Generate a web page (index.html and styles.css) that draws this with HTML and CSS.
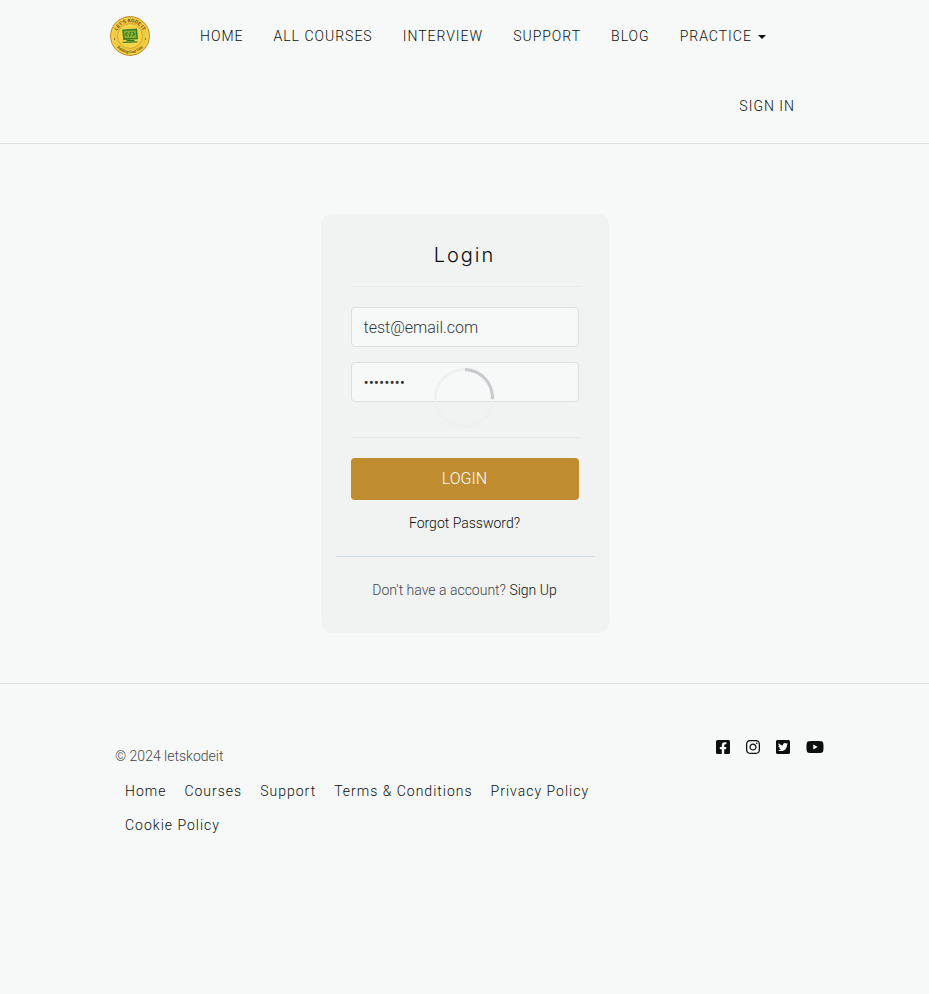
FILE: index.html
```html
<!DOCTYPE html>
<html lang="en">
<head>
<meta charset="utf-8">
<meta name="viewport" content="width=device-width, initial-scale=1">
<title>Login</title>
<link rel="stylesheet" href="styles.css">
</head>
<body>
<header class="site-header">
  <div class="container header-inner">
    <a class="brand" href="#" aria-label="Home page">
      <svg class="brand-logo" viewBox="0 0 40 40" aria-hidden="true">
        <defs>
          <path id="arc-top" d="M6.2 20a13.8 13.8 0 0 1 27.6 0"/>
          <path id="arc-bottom" d="M2.7 20a17.3 17.3 0 0 0 34.6 0"/>
        </defs>
        <circle cx="20" cy="20" r="19.4" fill="#efc93f" stroke="#b98a2a" stroke-width="1"/>
        <circle cx="20" cy="20" r="17.9" fill="none" stroke="#f8da55" stroke-width="1"/>
        <circle cx="20" cy="20" r="12.4" fill="#f6d649" stroke="#c99a2c" stroke-width=".8"/>
        <text class="seal-text top"><textPath href="#arc-top" startOffset="50%">LET'S KODE IT</textPath></text>
        <text class="seal-text"><textPath href="#arc-bottom" startOffset="50%">Adding Cod Tale</textPath></text>
        <circle cx="4.5" cy="23" r=".7" fill="#76551a"/>
        <circle cx="35.5" cy="23" r=".7" fill="#76551a"/>
        <path d="M13 14.200 26.400 13.400l.8 9.200-13.300.5z" fill="#8eae32" stroke="#397d24" stroke-width="1.500"/>
        <path d="m17.500 16.300-2 2 2 2m5-4.400 2 2-2 2m-2-4-1 4.600m-3 4.200h8M12.500 26.300l15-.5" fill="none" stroke="#397d24" stroke-width="1.300"/>
      </svg>
    </a>
    <nav class="main-nav" aria-label="Main">
      <a href="#">HOME</a>
      <a href="#">ALL COURSES</a>
      <a href="#">INTERVIEW</a>
      <a href="#">SUPPORT</a>
      <a href="#">BLOG</a>
      <a href="#">PRACTICE <span class="caret"></span></a>
    </nav>
    <nav class="account-nav" aria-label="Account"><a href="#">SIGN IN</a></nav>
  </div>
</header>

<main class="page">
  <section class="card">
    <form class="login-form">
      <h1>Login</h1>
      <hr>
      <input type="email" value="test@email.com" aria-label="Email Address">
      <input type="password" value="password" aria-label="Password">
      <hr class="form-end">
      <button type="submit">LOGIN</button>
      <a class="forgot" href="#">Forgot Password?</a>
      <svg class="spinner" viewBox="0 0 60 60" aria-hidden="true">
        <circle cx="30" cy="30" r="28.500" fill="none" stroke="#eff0f1" stroke-width="3"/>
        <path d="M31 1.500A28.500 28.500 0 0 1 58.500 31" fill="none" stroke="#c9cacf" stroke-width="3"/>
      </svg>
    </form>
    <p class="signup">Don't have a account? <a href="#">Sign Up</a></p>
  </section>
</main>

<footer class="site-footer">
  <div class="container footer-inner">
    <div class="footer-main">
      <p>© 2024 letskodeit</p>
      <nav class="footer-nav" aria-label="Footer">
        <a href="#">Home</a>
        <a href="#">Courses</a>
        <a href="#">Support</a>
        <a href="#">Terms &amp; Conditions</a>
        <a href="#">Privacy Policy</a>
        <a href="#">Cookie Policy</a>
      </nav>
    </div>
    <div class="social">
      <a href="#" aria-label="Facebook"><svg viewBox="0 0 448 512"><path d="M400 32H48A48 48 0 0 0 0 80v352a48 48 0 0 0 48 48h137.250V327.690h-63V256h63v-54.640c0-62.150 37-96.480 93.670-96.480 27.140 0 55.520 4.840 55.520 4.840v61h-31.270c-30.810 0-40.420 19.120-40.420 38.730V256h68.780l-11 71.690h-57.780V480H400a48 48 0 0 0 48-48V80a48 48 0 0 0-48-48z"/></svg></a>
      <a href="#" aria-label="Instagram"><svg viewBox="0 0 448 512"><path d="M224.100 141c-63.600 0-114.900 51.300-114.900 114.900s51.300 114.900 114.900 114.900S339 319.500 339 255.900 287.700 141 224.100 141zm0 189.600c-41.100 0-74.700-33.500-74.700-74.700s33.500-74.700 74.700-74.700 74.700 33.500 74.700 74.700-33.600 74.700-74.700 74.700zm146.400-194.300c0 14.900-12 26.800-26.800 26.800-14.900 0-26.800-12-26.800-26.800s12-26.800 26.800-26.800 26.800 12 26.800 26.800zm76.100 27.200c-1.700-35.900-9.900-67.700-36.200-93.900-26.200-26.200-58-34.400-93.900-36.200-37-2.100-147.900-2.100-184.900 0-35.800 1.700-67.600 9.900-93.900 36.100s-34.400 58-36.200 93.900c-2.100 37-2.100 147.900 0 184.900 1.700 35.900 9.900 67.700 36.200 93.900s58 34.400 93.900 36.200c37 2.100 147.900 2.100 184.900 0 35.900-1.700 67.700-9.900 93.900-36.200 26.200-26.200 34.400-58 36.200-93.900 2.100-37 2.100-147.800 0-184.800zM398.800 388c-7.800 19.600-22.900 34.700-42.600 42.600-29.500 11.700-99.500 9-132.100 9s-102.700 2.600-132.100-9c-19.600-7.800-34.700-22.900-42.600-42.600-11.700-29.500-9-99.500-9-132.100s-2.600-102.700 9-132.100c7.800-19.600 22.900-34.700 42.600-42.600 29.500-11.700 99.500-9 132.100-9s102.700-2.600 132.100 9c19.600 7.800 34.700 22.900 42.600 42.600 11.700 29.500 9 99.500 9 132.100s2.700 102.700-9 132.100z"/></svg></a>
      <a href="#" aria-label="Twitter"><svg viewBox="0 0 448 512"><path d="M400 32H48C21.500 32 0 53.500 0 80v352c0 26.500 21.500 48 48 48h352c26.500 0 48-21.500 48-48V80c0-26.500-21.500-48-48-48zm-48.900 158.800c.2 2.800.2 5.700.2 8.500 0 86.700-66 186.600-186.600 186.600-37.200 0-71.700-10.800-100.700-29.400 5.300.6 10.400.8 15.800.8 30.700 0 58.900-10.400 81.400-28-28.800-.6-53-19.500-61.300-45.500 10.100 1.500 19.200 1.500 29.600-1.200-30-6.100-52.500-32.500-52.500-64.400v-.8c8.700 4.900 18.900 7.900 29.600 8.300a65.447 65.447 0 0 1-29.200-54.600c0-12.200 3.200-23.400 8.900-33.100 32.300 39.800 80.800 65.800 135.200 68.600-9.300-44.500 24-80.600 64-80.600 18.900 0 35.900 7.900 47.900 20.700 14.800-2.800 29-8.300 41.600-15.800-4.900 15.200-15.200 28-28.800 36.100 13.200-1.400 26-5.100 37.800-10.200-8.900 13.100-20.100 24.700-32.900 34z"/></svg></a>
      <a href="#" aria-label="YouTube"><svg class="wide" viewBox="0 0 576 512"><path d="M549.655 124.083c-6.281-23.650-24.787-42.276-48.284-48.597C458.781 64 288 64 288 64S117.220 64 74.629 75.486c-23.497 6.322-42.003 24.947-48.284 48.597-11.412 42.867-11.412 132.305-11.412 132.305s0 89.438 11.412 132.305c6.281 23.650 24.787 41.500 48.284 47.821C117.220 448 288 448 288 448s170.780 0 213.371-11.486c23.497-6.321 42.003-24.171 48.284-47.821 11.412-42.867 11.412-132.305 11.412-132.305s0-89.438-11.412-132.305zM232.145 337.591V175.185l142.739 81.205z"/></svg></a>
    </div>
  </div>
</footer>
</body>
</html>
```
FILE: styles.css
```css
* { box-sizing: border-box; }
body {
  margin: 0;
  background: #f7f9f8;
  color: #42454c;
  font: 300 14px/20px Roboto, sans-serif;
}
a { color: #0b0f0e; text-decoration: none; }
.container { width: 100%; max-width: 751px; margin: 0 auto; padding: 0 16px; }

.site-header { border-bottom: 1px solid #dcdfde; padding: 1px 0 2px; }
.header-inner { display: flex; flex-wrap: wrap; align-items: center; }
.brand { padding: 0 35px 0 5px; line-height: 0; }
.brand-logo { width: 40px; height: 40px; }
.seal-text {
  font: 700 4px Roboto, sans-serif;
  fill: #76551a;
  text-anchor: middle;
}
.seal-text.top { font-size: 5px; }
.main-nav { display: flex; flex-wrap: wrap; }
.main-nav a, .account-nav a {
  display: block;
  padding: 0 15px;
  line-height: 70px;
  letter-spacing: 1px;
}
.account-nav { width: 100%; display: flex; justify-content: flex-end; padding-right: 14px; }
.caret {
  display: inline-block;
  margin-left: 2px;
  vertical-align: middle;
  border-top: 4px solid #0b0f0e;
  border-left: 4px solid transparent;
  border-right: 4px solid transparent;
}

.page { padding: 70px 15px 50px; }
.card {
  max-width: 288px;
  margin: 0 auto;
  border-radius: 10px;
  background: #f1f3f2;
  padding: 0 15px 33px;
  text-align: center;
}
.login-form {
  position: relative;
  display: flex;
  flex-direction: column;
  padding: 26px 15px 23px;
}
h1 {
  margin: 0;
  color: #0b0f0e;
  font: 300 20px/30px Inter, sans-serif;
  letter-spacing: 2px;
}
hr { width: 100%; margin: 16px 0 20px; border: 0; border-top: 1px solid #e5e7e6; }
.form-end { margin: 20px 0; }
input {
  width: 100%;
  height: 40px;
  margin-bottom: 15px;
  padding: 0 12px;
  border: 1px solid #dcdfde;
  border-radius: 4px;
  background: #f7f9f8;
  color: #30343b;
  font: 300 16px/24px Roboto, sans-serif;
}
button {
  height: 42px;
  margin-bottom: 13px;
  border: 0;
  border-radius: 4px;
  background: #bf8c30;
  color: #fff;
  font: 300 16px/24px Roboto, sans-serif;
}
.forgot { align-self: center; }
.spinner {
  position: absolute;
  top: 154px;
  left: 50%;
  width: 60px;
  height: 60px;
  margin-left: -31px;
}
.signup { margin: 0; padding-top: 23px; border-top: 1px solid #cfdbe2; }

.site-footer { border-top: 1px solid #dcdfde; padding: 50px 0; }
.footer-inner { display: flex; justify-content: space-between; align-items: flex-start; }
.footer-main { flex: 0 1 500px; padding: 12px 0 0 10px; }
.footer-main p { margin: 0 0 8px; }
.footer-nav { display: flex; flex-wrap: wrap; column-gap: 18px; padding-left: 10px; }
.footer-nav a { line-height: 34px; letter-spacing: 1px; }
.social { display: flex; gap: 16px; padding-top: 5px; }
.social svg { display: block; width: 14px; height: 16px; fill: #0b0f0e; }
.social .wide { width: 18px; }
```
